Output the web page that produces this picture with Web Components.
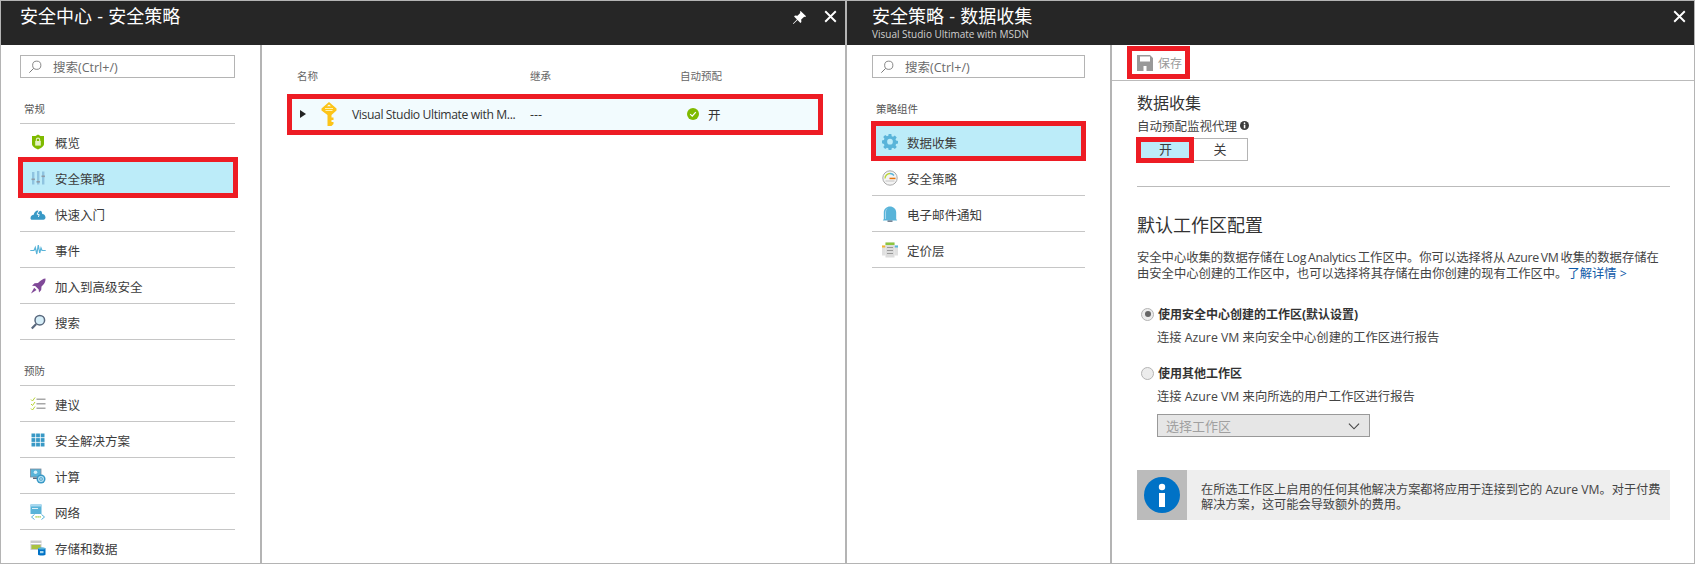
<!DOCTYPE html>
<html lang="zh-CN"><head><meta charset="utf-8"><title>安全中心</title>
<style>
html,body{margin:0;padding:0;background:#fff}
body{width:1695px;height:564px;overflow:hidden;font-family:"Open Sans","Noto Sans CJK SC",sans-serif;color:#3c3c3c}
#desk{display:flex;width:1695px;height:564px}
</style></head><body>
<div id="desk">
<x-blade style="--w:846px">
  <span slot="title">安全中心 - 安全策略</span>
  <x-icon slot="actions" name="pin" style="--s:15px"></x-icon>
  <x-icon slot="actions" name="close" style="--s:13px"></x-icon>
  <x-split style="--nav:261px;--pad:19px;--navr:25px">
    <div slot="nav">
      <x-search>搜索(Ctrl+/)</x-search>
      <x-nav-section>常规</x-nav-section>
      <x-nav-item icon="shield">概览</x-nav-item>
      <x-mark style="--t:-3px;--r:-3px;--b:-2px;--l:-2px"><x-nav-item icon="sliders" active>安全策略</x-nav-item></x-mark>
      <x-nav-item icon="cloud">快速入门</x-nav-item>
      <x-nav-item icon="pulse">事件</x-nav-item>
      <x-nav-item icon="rocket">加入到高级安全</x-nav-item>
      <x-nav-item icon="lens">搜索</x-nav-item>
      <x-nav-section>预防</x-nav-section>
      <x-nav-item icon="list">建议</x-nav-item>
      <x-nav-item icon="grid">安全解决方案</x-nav-item>
      <x-nav-item icon="compute">计算</x-nav-item>
      <x-nav-item icon="network">网络</x-nav-item>
      <x-nav-item icon="storage">存储和数据</x-nav-item>
    </div>
    <x-policy-table></x-policy-table>
  </x-split>
</x-blade>
<x-blade style="--w:849px;--tpad:25px" >
  <span slot="title">安全策略 - 数据收集</span>
  <span slot="sub">Visual Studio Ultimate with MSDN</span>
  <x-icon slot="actions" name="close" style="--s:13px"></x-icon>
  <x-split style="--nav:265px;--pad:25px;--navr:25px">
    <div slot="nav">
      <x-search>搜索(Ctrl+/)</x-search>
      <x-nav-section>策略组件</x-nav-section>
      <x-mark style="--t:-3px;--r:-1px;--b:-1px;--l:-1px"><x-nav-item icon="gear" active>数据收集</x-nav-item></x-mark>
      <x-nav-item icon="gauge">安全策略</x-nav-item>
      <x-nav-item icon="bell">电子邮件通知</x-nav-item>
      <x-nav-item icon="tier">定价层</x-nav-item>
    </div>
    <x-collection-form></x-collection-form>
  </x-split>
</x-blade>
</div>
<script>
const ICONS={
pin:'<path d="M9.2 1 15 6.6l-1 .9-1-.4-3.2 3.1.2 2.6-1 1L5.9 10.700 1.500 15 1 14.500l4.300-4.500L2.200 6.900l1-1 2.600.3L9 3l-.7-1z" fill="#fff"/>',
close:'<path d="M1.500 1.500 14.500 14.500M14.500 1.500 1.500 14.500" stroke="#fff" stroke-width="2.300" fill="none"/>',
shield:'<path d="M8 .5 10.500 2 14 2v8c0 2.500-3.500 4.500-6 5.500C5.500 14.500 2 12.500 2 10V2h3.500z" fill="#7fba00"/><rect x="5.200" y="7" width="5.600" height="4.600" fill="#e6f2c2"/><path d="M6.300 7V5.800a1.700 1.700 0 0 1 3.400 0V7" stroke="#e6f2c2" stroke-width="1.100" fill="none"/>',
sliders:'<g fill="#8fc4e0"><rect x="2" y="2" width="2.400" height="12.500"/><rect x="7" y="1" width="2.400" height="13.500"/><rect x="12" y="1.500" width="2.400" height="13"/></g><g fill="#8e9ba6"><rect x="1.500" y="8.500" width="3.400" height="1.600"/><rect x="6.500" y="11" width="3.400" height="1.600"/><rect x="11.500" y="5.500" width="3.400" height="1.600"/></g>',
cloud:'<path d="M.5 12.200C.5 10 2 8.700 3.700 8.700 4.300 6.400 5.800 4.500 7.900 4.500c.6 0 .9.900 1.500.8.600-.1 1-.6 1.600-.4 1 .4 1 2.500 1.300 3.100C14.200 8 15.500 9.700 15.500 11.600c0 1.100-.8 2.100-2 2.100H2C1 13.700.5 13 .5 12.200z" fill="#3999c6"/><path d="M8.800 5 7 8.200l2.200.4-.8 2.400" stroke="#fff" stroke-width=".9" fill="none"/>',
pulse:'<path d="M.3 8.500H4l1.300-3 1.500 6.500L8.300 3l1.400 8 1.300-5 1 2.500h3.700" stroke="#59b4d9" stroke-width="1.200" fill="none"/>',
rocket:'<path d="M15.500.5c.3 2.500-.8 5-3 7l-1 1-.3 3.500L9 14.500l-.3-3L5.200 8 2 7.800l2.600-2.500 3.400-.2 1-1c2-1.700 4-3.600 6.500-3.600z" fill="#804998"/><path d="M4.200 9.700 6.500 12 1 15.500z" fill="#804998"/>',
lens:'<circle cx="9.800" cy="6.200" r="4.800" fill="#d6eef8" stroke="#59687d" stroke-width="1.500"/><path d="M6.200 9.900 1.800 14.400" stroke="#59687d" stroke-width="2.200"/>',
list:'<path d="M1 3.500 2.500 5 5 1.500M1 8 2.500 9.500 5 6M1 12.500 2.500 14 5 10.500" stroke="#b8d432" stroke-width="1" fill="none"/><g fill="#a8a8a8"><rect x="6.500" y="2.500" width="9" height="1.500"/><rect x="6.500" y="7" width="9" height="1.500"/><rect x="6.500" y="11.500" width="9" height="1.500"/></g>',
grid:'<g fill="#3999c6"><rect x="1.500" y="1.500" width="3.800" height="3.800"/><rect x="6.100" y="1.500" width="3.800" height="3.800"/><rect x="10.700" y="1.500" width="3.800" height="3.800"/><rect x="1.500" y="6.100" width="3.800" height="3.800"/><rect x="6.100" y="6.100" width="3.800" height="3.800"/><rect x="10.700" y="6.100" width="3.800" height="3.800"/><rect x="1.500" y="10.700" width="3.800" height="3.800"/><rect x="6.100" y="10.700" width="3.800" height="3.800"/><rect x="10.700" y="10.700" width="3.800" height="3.800"/></g>',
compute:'<rect x=".5" y="1" width="10.500" height="8" fill="#59b4d9" stroke="#7a8b9c" stroke-width=".8"/><circle cx="5.500" cy="4.300" r="1.800" fill="#d6eef8"/><rect x="3" y="9.500" width="5" height="1.500" fill="#59687d"/><circle cx="11" cy="11" r="4.500" fill="#3999c6"/><circle cx="11" cy="11" r="2.400" fill="none" stroke="#b8e3f5" stroke-width="1.200"/><circle cx="11" cy="11" r=".8" fill="#fff"/>',
network:'<rect x=".5" y=".5" width="11" height="9.500" fill="#59b4d9"/><rect x=".5" y=".5" width="11" height="2" fill="#a8d8ef"/><rect x="2" y="4" width="6" height=".8" fill="#fff"/><path d="M4.500 10.500 1.500 13l3 2.500M11.500 10.500l3 2.500-3 2.500" stroke="#59b4d9" stroke-width="1" fill="none"/><g fill="#7fba00"><rect x="5.500" y="12.300" width="1.200" height="1.200"/><rect x="7.500" y="12.300" width="1.200" height="1.200"/><rect x="9.500" y="12.300" width="1.200" height="1.200"/></g>',
storage:'<rect x=".5" y=".5" width="11" height="9.500" fill="#c9c9c9"/><rect x=".5" y="3" width="11" height="1" fill="#fff"/><rect x="1.500" y="5" width="9" height="4" fill="#a9c23f"/><path d="M8 8.500c0-1 7.500-1 7.500 0v6c0 1.300-7.500 1.300-7.500 0z" fill="#0072c6"/><ellipse cx="11.800" cy="8.500" rx="3.700" ry="1" fill="#59b4d9"/><rect x="10" y="11" width="3.500" height="2.200" fill="#a8d8ef"/>',
gear:'<path fill-rule="evenodd" fill="#59b4d9" d="M6.600.5h2.800l.4 2.200 1.400.6 1.900-1.300 2 2-1.300 1.900.6 1.400 2.100.4v2.800l-2.100.4-.6 1.400 1.300 1.900-2 2-1.900-1.300-1.400.6-.4 2.100H6.600l-.4-2.100-1.400-.6-1.900 1.300-2-2 1.300-1.900-.6-1.400L-.5 10V7.200l2.100-.4.6-1.400L.9 3.500l2-2 1.900 1.300 1.400-.6zM8 5.500a3 3 0 1 0 0 6 3 3 0 0 0 0-6z" transform="translate(.4 -.4) scale(.95)"/>',
gauge:'<circle cx="8" cy="8" r="7.200" fill="#f4f4f4" stroke="#a9a9a9" stroke-width="1"/><path d="M3 8.500a5 5 0 0 1 5-5" stroke="#b8d432" stroke-width="1.300" fill="none"/><path d="M8 3.500a5 5 0 0 1 4 2" stroke="#59b4d9" stroke-width="1.300" fill="none"/><rect x="7.500" y="7.700" width="6" height="1.500" fill="#e8730c"/><rect x="3.500" y="10.500" width="9" height="1" fill="#c4c4c4"/>',
bell:'<path d="M1.800 13V6.500C1.800 3 4.700.5 8 .5s6.200 2.500 6.200 6V13l1 1.500H.8z" fill="#59b4d9"/><path d="M4 13V6C4 3.500 5.800 2 7 1.500 5 2 3 4 3 6.500V13z" fill="#a8d8ef"/><rect x="5.500" y="14.500" width="5" height="1.300" fill="#59687d"/>',
tier:'<rect x="0" y="3.500" width="3.500" height="10" fill="#e0e0e0"/><rect x="12.500" y="3.500" width="3.500" height="10" fill="#e0e0e0"/><rect x="0" y="3.500" width="3.500" height="2" fill="#f2b632"/><rect x="12.500" y="3.500" width="3.500" height="2" fill="#59b4d9"/><rect x="3.500" y=".5" width="9" height="15" fill="#dcdcdc"/><rect x="3.500" y=".5" width="9" height="2.500" fill="#8cc63f"/><g fill="#9a9a9a"><rect x="5" y="5" width="6" height="1"/><rect x="5" y="8" width="6" height="1"/><rect x="5" y="11" width="6" height="1"/></g>',
find:'<circle cx="10" cy="6" r="4.700" fill="none" stroke="#777" stroke-width="1"/><path d="M6.500 9.500 1.500 14.500" stroke="#777" stroke-width="1.100"/>',
save:'<path fill-rule="evenodd" fill="#999" d="M0 0h13l3 3v13H0zM3 1.500v5h10v-5zM6.500 11v5h3v-5z"/>',
key:'<path fill-rule="evenodd" fill="#fcc419" d="M8 0l7.500 6.500v2L10.500 13v2.500h2V18h-2v2h2v2l-2 2h-4V13L.5 8.500v-2zM8 2.500 6 4.200h4z"/><g fill="#fff3b0"><rect x="4" y="6" width="8" height="1"/><rect x="4.500" y="8" width="7" height="1"/></g>',
ok:'<circle cx="8" cy="8" r="8" fill="#7fba00"/><path d="M4.300 8.200 7 10.800 11.700 5.500" stroke="#fff" stroke-width="1.700" fill="none"/>',
info:'<circle cx="8" cy="8" r="8" fill="#3c3c3c"/><rect x="6.700" y="6.500" width="2.800" height="6.500" fill="#fff"/><circle cx="8" cy="3.900" r="1.500" fill="#fff"/>',
bigi:'<circle cx="18" cy="18" r="18" fill="#0072c6"/><circle cx="18" cy="10" r="3.200" fill="#fff"/><rect x="15" y="16" width="6" height="14" fill="#fff"/>',
chev:'<path d="M1 3.500 6.500 9 12 3.500" stroke="#444" stroke-width="1.200" fill="none"/>'
};
const VB={key:'0 0 16 24',bigi:'0 0 36 36',chev:'0 0 13 12'};
function def(name,css,html,init){
  const t=document.createElement('template');
  t.innerHTML='<style>'+css+'</style>'+html;
  customElements.define(name,class extends HTMLElement{
    constructor(){super();this.attachShadow({mode:'open'}).appendChild(t.content.cloneNode(true));}
    connectedCallback(){if(init)init(this,this.shadowRoot);}
  });
}
def('x-icon',':host{display:inline-flex;flex:none;width:var(--s,16px);height:var(--h,var(--s,16px))}svg{width:100%;height:100%;display:block}','<svg xmlns="http://www.w3.org/2000/svg"></svg>',(h,r)=>{
  const n=h.getAttribute('name'),s=r.querySelector('svg');
  s.setAttribute('viewBox',VB[n]||'0 0 16 16');s.innerHTML=ICONS[n]||'';
});
def('x-blade',`:host{display:flex;flex-direction:column;box-sizing:border-box;width:var(--w);height:564px;border:1px solid #b4b4b4}
header{display:flex;justify-content:space-between;flex:none;height:44px;box-sizing:border-box;background:#262626;color:#fff;padding:3px 0 0 var(--tpad,19px)}
.t{font-size:18px;line-height:24px;word-spacing:.5px;white-space:pre}
.s{font-size:10px;line-height:12px;color:#d0d0d0}
.a{display:flex;gap:17px;align-items:flex-start;padding:6px 8px 0 0}
.b{flex:1;min-height:0}`,`<header><div><div class="t"><slot name="title"></slot></div><div class="s"><slot name="sub"></slot></div></div><div class="a"><slot name="actions"></slot></div></header><div class="b"><slot></slot></div>`);
def('x-split',`:host{display:flex;height:100%;overflow:hidden}
nav{flex:none;width:var(--nav);box-sizing:border-box;border-right:2px solid #b4b4b4;padding:10px var(--navr) 0 var(--pad)}
main{flex:1;min-width:0}`,`<nav><slot name="nav"></slot></nav><main><slot></slot></main>`);
def('x-search',`:host{display:flex;align-items:center;height:23px;box-sizing:border-box;border:1px solid #b4b4b4;padding-left:7px;font-size:12.500px;color:#6b6b6b}
x-icon{--s:14px;margin-right:11px}`,`<x-icon name="find"></x-icon><slot></slot>`);
def('x-nav-section',`:host{display:block;height:46px;box-sizing:border-box;border-bottom:1px solid #c6c6c6;padding:23px 0 0 4px;font-size:10.500px;line-height:16px;color:#555}`,`<slot></slot>`);
def('x-nav-item',`:host{display:flex;align-items:center;height:36px;box-sizing:border-box;border-bottom:1px solid #c6c6c6;padding:1px 0 0 10px;font-size:12.500px;color:#3c3c3c}
:host([active]){background:#bcecf9}
x-icon{margin-right:9px}`,`<x-icon></x-icon><slot></slot>`,(h,r)=>{const i=r.querySelector('x-icon');if(!i.hasAttribute('name')){i.setAttribute('name',h.getAttribute('icon'));const s=i.shadowRoot.querySelector('svg');s.setAttribute('viewBox','0 0 16 16');s.innerHTML=ICONS[h.getAttribute('icon')];}});
def('x-mark',`:host{display:block;position:relative}
i{position:absolute;top:var(--t);right:var(--r);bottom:var(--b);left:var(--l);border:5px solid #ed1c24;pointer-events:none}`,`<slot></slot><i></i>`);
def('x-policy-table',`:host{display:block;padding:0 24px 0 27px;font-size:10.500px;color:#4a4a4a}
.g{display:grid;grid-template-columns:241px 150px 1fr}
.h{height:51px;box-sizing:border-box;padding-top:23px;line-height:16px;color:#666}
.h span:first-child{padding-left:8px}
.r{height:36px;align-items:center;background:#f2fbfe;font-size:12.500px;color:#333}
.c{display:flex;align-items:center}
.n{white-space:nowrap;font-size:12.200px;letter-spacing:-.4px}
.tri{width:0;height:0;border-left:6px solid #222;border-top:4.500px solid transparent;border-bottom:4.500px solid transparent;margin:0 15px 0 11px}
.k{--s:16px;--h:24px;margin-right:15px}
.o{--s:12px;margin:0 9px 0 7px}`,`<div class="g h"><span>名称</span><span>继承</span><span>自动预配</span></div>
<x-mark style="--t:-2px;--r:-2px;--b:-3px;--l:-2px"><div class="g r"><div class="c"><span class="tri"></span><x-icon class="k" name="key"></x-icon><span class="n">Visual Studio Ultimate with M...</span></div><div>---</div><div class="c"><x-icon class="o" name="ok"></x-icon><span>开</span></div></div></x-mark>`);
def('x-toggle',`:host{display:flex;width:111px;height:23px;box-sizing:border-box;border:1px solid #b4b4b4;font-size:13px;color:#3c3c3c}
x-mark{width:55px;--t:-2px;--r:-1px;--b:-3px;--l:-2px}
div{height:21px;line-height:21px;text-align:center}
.on{background:#bcecf9}.off{flex:1}`,`<x-mark><div class="on">开</div></x-mark><div class="off">关</div>`);
def('x-radio',`:host{display:flex;align-items:center;height:16px;font-size:12px;font-weight:700;color:#333;margin-top:var(--mt,0)}
.d{width:13px;height:13px;border-radius:50%;box-sizing:border-box;border:1px solid #b4b4b4;background:#ececec;display:flex;align-items:center;justify-content:center;margin:0 4px 0 4px;flex:none}
:host([on]) .d::after{content:"";width:6px;height:6px;border-radius:50%;background:#666}`,`<span class="d"></span><slot></slot>`);
def('x-select',`:host{display:flex;align-items:center;justify-content:space-between;width:213px;height:23px;box-sizing:border-box;border:1px solid #999;background:#e6e6e6;color:#a0a0a0;font-size:13px;padding:0 9px 0 8px;margin:9px 0 0 20px}
x-icon{--s:12px;--h:12px}`,`<slot></slot><x-icon name="chev"></x-icon>`);
def('x-callout',`:host{display:flex;height:50px;margin-top:33px;background:#eee;font-size:12.200px;line-height:15px;color:#444}
.l{width:50px;background:#bbb;display:flex;align-items:center;justify-content:center;flex:none}
.t{padding:12px 0 0 14px;white-space:nowrap}
x-icon{--s:36px}`,`<div class="l"><x-icon name="bigi"></x-icon></div><div class="t"><slot></slot></div>`);
def('x-collection-form',`:host{display:block;font-size:12.300px;color:#444}
.cmd{height:36px;box-sizing:border-box;border-bottom:1px solid #bbb;padding-left:25px}
x-mark.sv{display:inline-flex;align-items:center;height:35px;--t:1px;--r:-8px;--b:1px;--l:-10px;color:#999;font-size:12px}
.sv x-icon{margin-right:5px}
.f{padding:11px 24px 0 25px}
h2{margin:0;font-weight:400;font-size:16px;line-height:22px;color:#333}
.lab{display:flex;align-items:center;gap:3px;height:16px;margin:3px 0 5px;white-space:nowrap;font-size:12.500px}
.lab x-icon{--s:9px}
hr{border:0;border-top:1px solid #bbb;margin:25px 0 0}
h3{margin:24px 0 0;font-weight:400;font-size:18px;line-height:28px;color:#333}
p{margin:11px 0 0;line-height:16px;white-space:nowrap}
.lat{letter-spacing:-.3px;word-spacing:-1px}
a{color:#0f5aa8;text-decoration:none}
.sub{margin:8px 0 0 20px;height:16px;line-height:16px}`,`<div class="cmd"><x-mark class="sv"><x-icon name="save"></x-icon><span>保存</span></x-mark></div>
<div class="f"><h2>数据收集</h2><div class="lab">自动预配监视代理<x-icon name="info"></x-icon></div><x-toggle></x-toggle><hr>
<h3>默认工作区配置</h3>
<p>安全中心收集的数据存储在<span class="lat"> Log Analytics </span>工作区中。你可以选择将从<span class="lat"> Azure VM </span>收集的数据存储在<br>由安全中心创建的工作区中，也可以选择将其存储在由你创建的现有工作区中。<a>了解详情 &gt;</a></p>
<x-radio on style="--mt:24px">使用安全中心创建的工作区(默认设置)</x-radio>
<div class="sub">连接 Azure VM 来向安全中心创建的工作区进行报告</div>
<x-radio style="--mt:19px">使用其他工作区</x-radio>
<div class="sub">连接 Azure VM 来向所选的用户工作区进行报告</div>
<x-select>选择工作区</x-select>
<x-callout>在所选工作区上启用的任何其他解决方案都将应用于连接到它的 Azure VM。对于付费<br>解决方案，这可能会导致额外的费用。</x-callout></div>`);
</script>
</body></html>
